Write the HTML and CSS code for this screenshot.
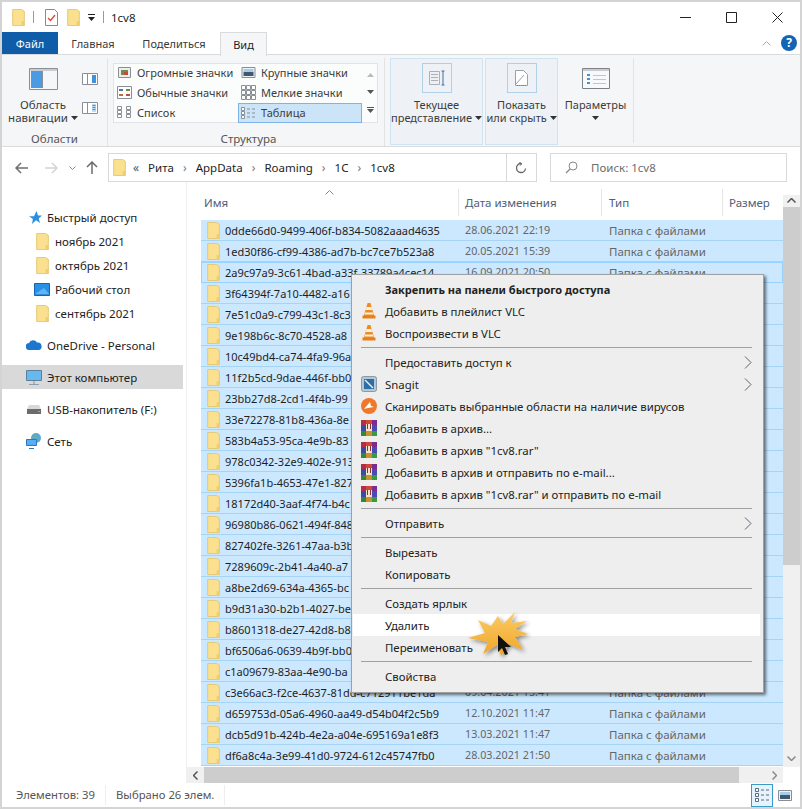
FILE: index.html
```html
<!DOCTYPE html>
<html lang="ru">
<head>
  <meta charset="UTF-8">
  <title>1cv8</title>
  <link rel="stylesheet" href="styles.css">
</head>
<body>
  <svg class="sprites" width="0" height="0">
    <defs>
      <symbol id="folder" viewBox="0 0 14 19">
        <path d="M.5.500h10l3 2v16H.5z" fill="#fbe08f" stroke="#e3c56f"/>
        <path d="M10.500 13.500h3v5h-3z" fill="#f4cd6b"/>
      </symbol>
      <symbol id="vlc" viewBox="0 0 16 16">
        <path d="M6.600 0h2.800l3.800 13H2.800z" fill="#f08a1d"/>
        <path d="M5.500 4h5l.8 3H4.700z" fill="#f6f1e8"/>
        <path d="M4.200 9.500h7.600l.6 2H3.600z" fill="#f6f1e8"/>
        <path d="M1.500 12.500h13v3h-13z" fill="#e8801a"/>
      </symbol>
      <symbol id="rar" viewBox="0 0 16 16">
        <path d="M0 0h5v5H0z" fill="#b0304a"/><path d="M5 0h6v4H5z" fill="#d0483a"/><path d="M11 0h5v5h-5z" fill="#7a2d8c"/>
        <path d="M0 5h5v6H0z" fill="#3c4aa8"/><path d="M5 4h6v7H5z" fill="#f3e6c8"/><path d="M11 5h5v6h-5z" fill="#4a4ab4"/>
        <path d="M0 11h5v5H0z" fill="#2e8a3a"/><path d="M5 11h6v5H5z" fill="#c9922e"/><path d="M11 11h5v5h-5z" fill="#3a9a44"/>
        <path d="M6.500 4v5M9.500 4v5" stroke="#8a3030"/>
      </symbol>
      <symbol id="chevron" viewBox="0 0 8 13">
        <path d="M1 .5 7 6.500l-6 6" fill="none" stroke="#5c6270"/>
      </symbol>
      <symbol id="caret" viewBox="0 0 7 4">
        <path d="M0 0h7L3.500 4z" fill="#333"/>
      </symbol>
    </defs>
  </svg>

  <div class="window">
    <!-- title bar -->
    <header class="titlebar">
      <svg class="folder-sm"><use href="#folder"/></svg>
      <span class="qa-sep"></span>
      <svg class="qa-icon" width="13" height="17" viewBox="0 0 13 17">
        <path d="M.5.500h9l3 3v13H.5z" fill="#fff" stroke="#8a8a8a"/>
        <path d="M3 9l2.500 2.500L10 6" fill="none" stroke="#d9492c" stroke-width="1.300"/>
      </svg>
      <svg class="folder-sm qa-second"><use href="#folder"/></svg>
      <svg class="qa-menu" width="7" height="7" viewBox="0 0 7 7">
        <path d="M0 0h7v1H0zM0 3h7L3.500 7z" fill="#222"/>
      </svg>
      <span class="qa-sep qa-sep-last"></span>
      <span class="title-text">1cv8</span>
      <div class="win-buttons">
        <svg width="11" height="11" viewBox="0 0 11 11"><path d="M0 5.500h11" stroke="#222"/></svg>
        <svg width="11" height="11" viewBox="0 0 11 11"><path d="M.5.500h10v10H.5z" fill="none" stroke="#222"/></svg>
        <svg width="11" height="11" viewBox="0 0 11 11"><path d="M.5.500l10 10M10.500.500l-10 10" stroke="#222"/></svg>
      </div>
    </header>

    <!-- tabs -->
    <nav class="tabs">
      <span class="tab tab-file">Файл</span>
      <span class="tab tab-home">Главная</span>
      <span class="tab tab-share">Поделиться</span>
      <span class="tab tab-view">Вид</span>
      <svg class="ribbon-up" width="9" height="5" viewBox="0 0 9 5"><path d="M.5 4.500l4-4 4 4" fill="none" stroke="#aaa"/></svg>
      <span class="help">?</span>
    </nav>

    <!-- ribbon -->
    <section class="ribbon">
      <div class="group group-panes">
        <div class="panes-row">
          <div class="nav-pane">
            <svg width="29" height="22" viewBox="0 0 29 22">
              <path d="M.5.500h28v21H.5z" fill="#f4f6f8" stroke="#8a8f96"/>
              <path d="M1 1h27v2H1z" fill="#c9cdd2"/>
              <path d="M2 3h11v17H2z" fill="#4a9be4"/>
              <path d="M13.500 3v17" stroke="#8a8f96"/>
            </svg>
            <div class="btn-label">
              <div>Область</div>
              <div>навигации <svg class="caret"><use href="#caret"/></svg></div>
            </div>
          </div>
          <div class="pane-side">
            <svg width="16" height="12" viewBox="0 0 16 12">
              <path d="M.5.500h15v11H.5z" fill="#fff" stroke="#8a8f96"/>
              <path d="M10 2h4v8h-4z" fill="#3f93dc"/><path d="M5.500 1v10" stroke="#8a8f96"/>
            </svg>
            <svg width="16" height="12" viewBox="0 0 16 12">
              <path d="M.5.500h15v11H.5z" fill="#fff" stroke="#8a8f96"/>
              <path d="M10 2h4v8h-4z" fill="#bcdcf5"/><path d="M10.500 3.500h3M10.500 5.500h3M10.500 7.500h3" stroke="#3f93dc"/><path d="M5.500 1v10" stroke="#8a8f96"/>
            </svg>
          </div>
        </div>
        <div class="group-title">Области</div>
      </div>

      <div class="group group-layout">
        <div class="gallery-wrap">
          <div class="gallery">
            <div class="g-item">
              <svg width="13" height="11" viewBox="0 0 13 11"><path d="M.5.500h12v10H.5z" fill="#eee" stroke="#8a8f96"/><path d="M3 3h7v5H3z" fill="#6b8f4a"/><path d="M6 5h4v3H6z" fill="#c9483c"/></svg>
              Огромные значки
            </div>
            <div class="g-item">
              <svg width="14" height="11" viewBox="0 0 14 11"><path d="M.5.500h13v10H.5z" fill="#eef3f7" stroke="#8a8f96"/><path d="M2 2h10v3H2z" fill="#a8cce8"/><path d="M2 5h10v4H2z" fill="#40586e"/></svg>
              Крупные значки
            </div>
            <div class="g-item">
              <svg width="15" height="13" viewBox="0 0 15 13"><path d="M.5.500h14v12H.5z" fill="#fff" stroke="#8a8f96"/><path d="M2 3h4v2H2z" fill="#4a7ea8"/><path d="M9 3h4v2H9z" fill="#6b8f4a"/><path d="M2 8h4v2H2z" fill="#c9683c"/><path d="M9 8h4v2H9z" fill="#c9483c"/></svg>
              Обычные значки
            </div>
            <div class="g-item">
              <svg width="15" height="15" viewBox="0 0 15 15"><path d="M.5.500h4v4h-4zM5.500.500h4v4h-4zM10.500.500h4v4h-4zM.5 5.500h4v4h-4zM5.500 5.500h4v4h-4zM10.500 5.500h4v4h-4zM.5 10.500h4v4h-4zM5.500 10.500h4v4h-4zM10.500 10.500h4v4h-4z" fill="#fff" stroke="#8a8f96"/></svg>
              Мелкие значки
            </div>
            <div class="g-item">
              <svg width="15" height="12" viewBox="0 0 15 12"><path d="M.5.500h4v3h-4zM.5 4.500h4v3h-4zM.5 8.500h4v3h-4zM9.500.500h4v3h-4zM9.500 4.500h4v3h-4zM9.500 8.500h4v3h-4z" fill="#fff" stroke="#8a8f96"/></svg>
              Список
            </div>
            <div class="g-item g-active">
              <svg width="15" height="12" viewBox="0 0 15 12"><path d="M.5.500h3v3h-3zM.5 4.500h3v3h-3zM.5 8.500h3v3h-3z" fill="#fff" stroke="#8a8f96"/><path d="M6 2h3M11 2h3M6 6h3M11 6h3M6 10h3M11 10h3" stroke="#8a8f96"/></svg>
              Таблица
            </div>
          </div>
          <div class="g-scroll">
            <svg width="7" height="4" viewBox="0 0 7 4"><path d="M3.500 0L7 4H0z" fill="#bbb"/></svg>
            <svg width="7" height="4" viewBox="0 0 7 4"><path d="M0 0h7L3.500 4z" fill="#555"/></svg>
            <svg width="7" height="6" viewBox="0 0 7 6"><path d="M0 0h7v1H0zM0 2h7L3.500 6z" fill="#555"/></svg>
          </div>
        </div>
        <div class="group-title">Структура</div>
      </div>

      <div class="big-btn btn-current">
        <div class="big-icon">
          <svg width="16" height="16" viewBox="0 0 16 16"><path d="M.5 1.500h10v13H.5z" fill="#eef1f4" stroke="#a9b0b8"/><path d="M2 4.500h7M2 7.500h7M2 10.500h7" stroke="#a9b0b8"/><path d="M14 1v14M12.500 1h3M12.500 15h3" stroke="#3c6e9a"/></svg>
        </div>
        <div class="btn-label">
          <div>Текущее</div>
          <div>представление <svg class="caret"><use href="#caret"/></svg></div>
        </div>
      </div>
      <div class="big-btn btn-show">
        <div class="big-icon">
          <svg width="13" height="16" viewBox="0 0 13 16"><path d="M.5.500h8l4 4v11H.5z" fill="#fff" stroke="#9aa0a6"/><path d="M1 14L9 5" stroke="#9aa0a6"/><path d="M2 15.500h10" stroke="#3f93dc" stroke-dasharray="1 1"/></svg>
        </div>
        <div class="btn-label">
          <div>Показать</div>
          <div>или скрыть <svg class="caret"><use href="#caret"/></svg></div>
        </div>
      </div>
      <div class="params">
        <svg width="28" height="21" viewBox="0 0 28 21"><path d="M.5.500h27v20H.5z" fill="#f8f9fa" stroke="#7d8287"/><path d="M1 1h26v2H1z" fill="#c9cdd2"/><path d="M5 6h3v2H5zM5 10h3v2H5zM5 14h3v2H5z" fill="#3f93dc"/><path d="M11 7.500h13M11 11.500h13M11 15.500h13" stroke="#c2c6ca"/></svg>
        <div class="btn-label">
          <div>Параметры</div>
          <div><svg class="caret"><use href="#caret"/></svg></div>
        </div>
      </div>
    </section>

    <!-- address row -->
    <div class="addr-row">
      <div class="addr-nav">
        <svg width="13" height="12" viewBox="0 0 13 12"><path d="M6 1L1 6l5 5M1 6h12" fill="none" stroke="#6d6d6d" stroke-width="1.500"/></svg>
        <svg class="fwd" width="13" height="12" viewBox="0 0 13 12"><path d="M7 1l5 5-5 5M12 6H0" fill="none" stroke="#d4d4d4" stroke-width="1.500"/></svg>
        <svg class="down" width="7" height="4" viewBox="0 0 7 4"><path d="M.5.500l3 3 3-3" fill="none" stroke="#8a8a8a"/></svg>
        <svg class="up" width="12" height="13" viewBox="0 0 12 13"><path d="M1 6l5-5 5 5M6 1v12" fill="none" stroke="#6d6d6d" stroke-width="1.500"/></svg>
      </div>
      <div class="addr-box">
        <svg class="folder-sm addr-folder"><use href="#folder"/></svg>
        <span class="crumb-more">«</span>
        <span class="crumb">Рита</span><span class="crumb-arrow">›</span>
        <span class="crumb">AppData</span><span class="crumb-arrow">›</span>
        <span class="crumb">Roaming</span><span class="crumb-arrow">›</span>
        <span class="crumb">1С</span><span class="crumb-arrow">›</span>
        <span class="crumb">1cv8</span>
        <span class="addr-drop">
          <svg width="11" height="12" viewBox="0 0 11 12"><path d="M5 1.500a4.500 4.500 0 1 0 4.500 5" fill="none" stroke="#666" stroke-width="1.300"/><path d="M3.500.5 6 1.700 3.800 3.500" fill="none" stroke="#666"/></svg>
        </span>
      </div>
      <div class="search-box">
        <svg width="13" height="13" viewBox="0 0 13 13"><circle cx="8" cy="5" r="4" fill="none" stroke="#888"/><path d="M5 8l-4 4" stroke="#888" stroke-width="1.200"/></svg>
        <span>Поиск: 1cv8</span>
      </div>
    </div>

    <!-- nav tree + list -->
    <main class="content">
      <aside class="tree">
        <div class="tree-item level-0">
          <svg width="16" height="13" viewBox="-3 0 16 13"><path d="M7.500 0l1.500 4.500h4L9.700 7.400l1.300 4.600L7 9.300 3 13l.9-5L0 5.200h5z" fill="#2b8fe0"/></svg>
          Быстрый доступ
        </div>
        <div class="tree-item level-1"><svg class="folder-sm"><use href="#folder"/></svg>ноябрь 2021</div>
        <div class="tree-item level-1"><svg class="folder-sm"><use href="#folder"/></svg>октябрь 2021</div>
        <div class="tree-item level-1">
          <svg class="tree-desk" width="16" height="13" viewBox="0 0 16 13"><path d="M.5.500h15v12H.5z" fill="#2a8fe6" stroke="#1565b5"/><path d="M1 11l9-6 5 6z" fill="#63b4f2"/></svg>
          Рабочий стол
        </div>
        <div class="tree-item level-1"><svg class="folder-sm"><use href="#folder"/></svg>сентябрь 2021</div>
        <div class="tree-item level-0 tree-gap">
          <svg width="16" height="10" viewBox="0 0 16 10"><path d="M3.500 10a3.500 3.500 0 0 1-.5-7A4.500 4.500 0 0 1 11 2.500 3.800 3.800 0 0 1 12.500 10z" fill="#1c78cf"/></svg>
          OneDrive - Personal
        </div>
        <div class="tree-item level-0 tree-gap tree-selected">
          <svg width="16" height="15" viewBox="0 0 16 15"><path d="M.5.500h15v10H.5z" fill="#67b8ee" stroke="#5c7f9b"/><path d="M3 14.500h10" stroke="#8aa0b2"/><path d="M7 11h2v3H7z" fill="#a7b7c4"/></svg>
          Этот компьютер
        </div>
        <div class="tree-item level-0 tree-gap">
          <svg width="14" height="10" viewBox="0 0 14 10"><path d="M2 1h10l2 4v5H0V5z" fill="#d8d8d8"/><path d="M0 5h14v5H0z" fill="#6c6c6c"/><path d="M11 7h2v1h-2z" fill="#5fd35f"/></svg>
          USB-накопитель (F:)
        </div>
        <div class="tree-item level-0 tree-gap">
          <svg width="16" height="16" viewBox="0 0 16 16"><circle cx="10" cy="5" r="5" fill="#5aa7dc"/><path d="M8 1l3 3-2 3z" fill="#72b95c"/><path d="M.5 6.500h10v6H.5z" fill="#57aef0" stroke="#2b79bd"/><path d="M3 15.500h5" stroke="#2b79bd"/></svg>
          Сеть
        </div>
      </aside>

      <section class="list">
        <div class="list-head">
          <div class="col col-name">Имя
            <svg class="sort-mark" width="9" height="5" viewBox="0 0 9 5"><path d="M.5 4.500l4-4 4 4" fill="none" stroke="#888"/></svg>
          </div>
          <div class="col col-date">Дата изменения</div>
          <div class="col col-type">Тип</div>
          <div class="col col-size">Размер</div>
        </div>
        <div class="rows-area">
          <div class="rows" id="rows"></div>
          <div class="vscroll">
            <svg width="9" height="5" viewBox="0 0 9 5"><path d="M.5 4.500l4-4 4 4" fill="none" stroke="#555" stroke-width="1.500"/></svg>
            <div class="vthumb"></div>
            <svg class="v-down" width="9" height="5" viewBox="0 0 9 5"><path d="M.5.500l4 4 4-4" fill="none" stroke="#888" stroke-width="1.500"/></svg>
          </div>
        </div>
        <div class="hscroll">
          <svg width="5" height="9" viewBox="0 0 5 9"><path d="M4.500.500l-4 4 4 4" fill="none" stroke="#555" stroke-width="1.500"/></svg>
          <div class="hthumb"></div>
          <svg width="5" height="9" viewBox="0 0 5 9"><path d="M.5.500l4 4-4 4" fill="none" stroke="#888" stroke-width="1.500"/></svg>
        </div>
      </section>
    </main>

    <!-- status bar -->
    <footer class="status">
      <span class="status-cell">Элементов: 39</span>
      <span class="status-cell">Выбрано 26 элем.</span>
      <div class="view-btns">
        <span class="view-on">
          <svg width="15" height="14" viewBox="0 0 15 14"><path d="M.5.500h3v3h-3zM.5 5.500h3v3h-3zM.5 10.500h3v3h-3z" fill="#fff" stroke="#5f6a74"/><path d="M6 2h3M11 2h3M6 7h3M11 7h3M6 12h3M11 12h3" stroke="#5f6a74"/></svg>
        </span>
        <svg width="14" height="11" viewBox="0 0 14 11"><path d="M.5.500h13v10H.5z" fill="#eef3f7" stroke="#8a8f96"/><path d="M2 2h10v3H2z" fill="#a8cce8"/><path d="M2 5h10v4H2z" fill="#40586e"/></svg>
      </div>
    </footer>

    <!-- context menu -->
    <div class="ctx" id="ctx"></div>

    <!-- cursor highlight -->
    <svg class="burst" width="70" height="56" viewBox="0 0 70 56">
      <defs>
        <linearGradient id="burst-fill" x1="0" y1="0" x2="0" y2="1">
          <stop offset="0" stop-color="#fbcb62"/>
          <stop offset="1" stop-color="#f0a52a"/>
        </linearGradient>
        <filter id="burst-shadow" x="-20%" y="-20%" width="150%" height="150%">
          <feDropShadow dx="2" dy="2" stdDeviation="2" flood-color="#000" flood-opacity=".45"/>
        </filter>
      </defs>
      <path d="M13 12L26 18 33 8 38 16 50 4 46 15 62 13 50 21 63 26 50 29 58 42 44 36 36 48 32 37 18 46 23 34 3 30 20 25z" fill="url(#burst-fill)" filter="url(#burst-shadow)"/>
      <path d="M33 27v17l4-4 3 7 3-1-3-7h6z" fill="#111"/>
    </svg>
  </div>

  <script src="app.js"></script>
</body>
</html>
```

FILE: styles.css
```css
* {
  box-sizing: border-box;
}
html, body {
  margin: 0;
  padding: 0;
}
body {
  width: 802px;
  height: 809px;
  overflow: hidden;
  font-family: "Noto Sans", "Open Sans", sans-serif;
  font-size: 11.5px;
  color: #1e1e1e;
  background: #fff;
}
.sprites {
  position: absolute;
}
.window {
  position: relative;
  width: 802px;
  height: 809px;
  border: 2px solid #d4d4d4;
  overflow: hidden;
  display: flex;
  flex-direction: column;
  background: #fff;
}
.folder-sm {
  width: 13px;
  height: 17px;
  flex: none;
}

/* title bar */
.titlebar {
  height: 30px;
  display: flex;
  align-items: center;
  padding-left: 10px;
  flex: none;
}
.qa-sep {
  width: 1px;
  height: 12px;
  background: #9a9a9a;
  margin: 0 11px 0 8px;
}
.qa-second {
  margin-left: 9px;
}
.qa-menu {
  margin-left: 8px;
}
.qa-sep-last {
  margin: 0 7px 0 8px;
}
.title-text {
  font-size: 11.5px;
}
.win-buttons {
  margin-left: auto;
  margin-right: 17px;
  display: flex;
  gap: 35px;
}

/* tabs */
.tabs {
  height: 23px;
  display: flex;
  position: relative;
  flex: none;
  border-bottom: 1px solid #dadbdc;
  align-items: stretch;
}
.tab {
  display: flex;
  align-items: center;
  justify-content: center;
  font-size: 11px;
}
.tab-file {
  width: 56px;
  background: #0f5ca8;
  color: #fff;
}
.tab-home {
  width: 70px;
  color: #3a3a3a;
}
.tab-share {
  width: 92px;
  color: #3a3a3a;
}
.tab-view {
  width: 47px;
  height: 24px;
  border: 1px solid #dadbdc;
  border-bottom: none;
  background: #f5f6f7;
}
.ribbon-up {
  position: absolute;
  left: 760px;
  top: 9px;
}
.help {
  position: absolute;
  left: 779px;
  top: 3px;
  width: 16px;
  height: 16px;
  border-radius: 50%;
  background: #1464b4;
  color: #fff;
  font-weight: 700;
  font-size: 12px;
  line-height: 16px;
  text-align: center;
}

/* ribbon */
.ribbon {
  height: 92px;
  flex: none;
  display: flex;
  background: #f5f6f7;
  border-bottom: 1px solid #dadbdc;
  padding-top: 3px;
  color: #3c3c3c;
  font-size: 11px;
}
.group {
  display: flex;
  flex-direction: column;
  border-right: 1px solid #e2e3e4;
}
.group-title {
  margin-top: auto;
  text-align: center;
  color: #555;
  line-height: 15px;
  font-size: 11.5px;
}
.group-panes {
  width: 106px;
}
.panes-row {
  display: flex;
  padding-top: 10px;
}
.nav-pane {
  width: 82px;
  display: flex;
  flex-direction: column;
  align-items: center;
  font-size: 11.5px;
}
.btn-label {
  text-align: center;
  line-height: 13px;
  margin-top: 8px;
  white-space: nowrap;
}
.caret {
  width: 7px;
  height: 4px;
  vertical-align: 2px;
}
.pane-side {
  display: flex;
  flex-direction: column;
  gap: 17px;
  padding-top: 5px;
  margin-left: -2px;
}
.group-layout {
  width: 277px;
  padding-left: 5px;
}
.gallery-wrap {
  width: 265px;
  height: 60px;
  margin-top: 5px;
  display: flex;
  border: 1px solid #e1e3e6;
  background: #fbfcfc;
}
.gallery {
  width: 249px;
  margin-top: -1px;
  display: grid;
  grid-template-columns: 124px 124px;
  grid-auto-rows: 20px;
}
.g-item {
  display: flex;
  align-items: center;
  gap: 5px;
  padding: 0 0 2px 3px;
  white-space: nowrap;
}
.g-item svg {
  width: 15px;
  flex: none;
}
.g-active {
  background: #cce4f7;
  border: 1px solid #7eb4ea;
  padding: 0 0 1px 2px;
}
.g-scroll {
  flex: 1;
  display: flex;
  flex-direction: column;
  align-items: center;
  justify-content: space-around;
  padding: 3px 0;
}
.big-btn {
  height: 87px;
  background: #eef2f7;
  border: 1px solid #cfe3f2;
  display: flex;
  flex-direction: column;
  align-items: center;
  padding-top: 4px;
}
.big-icon {
  width: 30px;
  height: 30px;
  border: 1px solid #b0d0e8;
  display: flex;
  align-items: center;
  justify-content: center;
}
.btn-current {
  width: 93px;
  margin-left: 5px;
}
.btn-show {
  width: 73px;
  margin-left: 2px;
}
.big-btn .btn-label {
  margin-top: 5px;
}
.params {
  width: 76px;
  display: flex;
  flex-direction: column;
  align-items: center;
  padding-top: 10px;
  border-right: 1px solid #e2e3e4;
  height: 85px;
}
.params .btn-label {
  margin-top: 9px;
}

/* address row */
.addr-row {
  height: 35px;
  flex: none;
  display: flex;
  padding-top: 6px;
  align-items: flex-start;
}
.addr-nav {
  width: 106px;
  height: 29px;
  display: flex;
  align-items: center;
  padding-left: 13px;
}
.fwd {
  margin-left: 17px;
}
.down {
  margin-left: 11px;
}
.up {
  margin-left: 10px;
}
.addr-box {
  width: 429px;
  height: 29px;
  border: 1px solid #d9d9d9;
  display: flex;
  align-items: center;
  position: relative;
}
.addr-folder {
  margin-left: 4px;
}
.crumb-more {
  margin: 0 9px 0 7px;
  color: #555;
  font-size: 12px;
}
.crumb-arrow {
  color: #777;
  margin: 0 9px;
  font-size: 12px;
}
.addr-drop {
  position: absolute;
  right: 0;
  top: 0;
  width: 30px;
  height: 27px;
  border-left: 1px solid #d9d9d9;
  display: flex;
  align-items: center;
  justify-content: center;
}
.search-box {
  width: 237px;
  height: 29px;
  margin-left: 13px;
  border: 1px solid #d9d9d9;
  display: flex;
  align-items: center;
  gap: 13px;
  padding-left: 14px;
  color: #6d6d6d;
}

/* tree */
.content {
  flex: 1;
  display: flex;
  min-height: 0;
}
.tree {
  width: 185px;
  flex: none;
  padding-top: 23px;
  border-right: 1px solid #f0f0f0;
  color: #222;
}
.tree-item {
  height: 24px;
  display: flex;
  align-items: center;
  white-space: nowrap;
}
.level-0 {
  padding-left: 24px;
  gap: 5px;
}
.level-0 svg {
  width: 16px;
  flex: none;
}
.level-1 {
  padding-left: 34px;
  gap: 6px;
}
.level-1 svg {
  width: 13px;
  flex: none;
}
.level-1 svg.tree-desk {
  width: 16px;
  margin: 0 -1px 0 -2px;
}
.tree-gap {
  margin-top: 8px;
}
.tree-selected {
  background: #d9d9d9;
  width: 181px;
}

/* list */
.list {
  flex: 1;
  display: flex;
  flex-direction: column;
  min-width: 0;
}
.list-head {
  height: 38px;
  display: flex;
  color: #4c607a;
  flex: none;
  position: relative;
}
.col {
  height: 27px;
  margin-top: 7px;
  display: flex;
  align-items: center;
  padding-left: 7px;
  border-right: 1px solid #e5e5e5;
  white-space: nowrap;
}
.col-name {
  width: 272px;
  padding-left: 17px;
}
.col-date {
  width: 143px;
  padding-left: 6px;
}
.col-type {
  width: 121px;
}
.col-size {
  border-right: none;
  padding-left: 6px;
}
.sort-mark {
  position: absolute;
  left: 138px;
  top: 8px;
}
.rows-area {
  flex: 1;
  display: flex;
  min-height: 0;
  position: relative;
}
.rows {
  width: 582px;
  margin-left: 14px;
}
.row {
  height: 21px;
  display: flex;
  align-items: center;
  background: #cce8ff;
  border-bottom: 1px solid #a6d4f5;
  white-space: nowrap;
  overflow: hidden;
}
.row-focus {
  outline: 1px solid #99d1ff;
  outline-offset: -1px;
}
.row svg {
  width: 13px;
  height: 17px;
  margin-left: 6px;
  flex: none;
}
.r-name {
  width: 245px;
  padding-left: 5px;
  font-size: 11px;
  color: #1e1e1e;
}
.r-date {
  width: 144px;
  color: #666;
  font-size: 10.75px;
}
.r-type {
  color: #666;
}
.vscroll {
  position: absolute;
  right: 0;
  top: -25px;
  bottom: 0;
  width: 17px;
  background: #f0f0f0;
  display: flex;
  flex-direction: column;
  align-items: center;
  padding-top: 3px;
}
.vthumb {
  width: 100%;
  height: 358px;
  background: #cdcdcd;
  margin-top: 4px;
}
.v-down {
  margin-top: auto;
  margin-bottom: 6px;
}
.hscroll {
  height: 16px;
  flex: none;
  background: #f0f0f0;
  display: flex;
  align-items: center;
  padding: 0 6px;
  margin-right: 17px;
}
.hthumb {
  width: 535px;
  height: 100%;
  background: #cdcdcd;
  margin: 0 33px 0 6px;
  flex: none;
}

/* status bar */
.status {
  height: 24px;
  flex: none;
  display: flex;
  align-items: center;
  padding-left: 14px;
  color: #555;
  font-size: 11.3px;
  position: relative;
}
.status-cell {
  padding-right: 10px;
  margin-right: 10px;
  border-right: 1px solid #eee;
  line-height: 20px;
}
.view-btns {
  margin-left: auto;
  display: flex;
  align-items: center;
  gap: 5px;
  padding-right: 8px;
}
.view-on {
  width: 22px;
  height: 23px;
  background: #e5f3ff;
  border: 1px solid #3b9bc8;
  display: flex;
  align-items: center;
  justify-content: center;
}

/* context menu */
.ctx {
  position: absolute;
  left: 349px;
  top: 272px;
  width: 413px;
  height: 419px;
  background: #eeeeee;
  border: 1px solid #a0a0a0;
  box-shadow: 2px 2px 3px rgba(0, 0, 0, .55);
  padding: 3px 3px 3px 1px;
  color: #222;
  font-size: 11.4px;
}
.m-item {
  height: 22px;
  display: flex;
  align-items: center;
  position: relative;
  padding-left: 32px;
  white-space: nowrap;
}
.m-item > svg.m-icon {
  position: absolute;
  left: 8px;
  top: 3px;
  width: 16px;
  height: 16px;
}
.m-item > svg.m-arrow {
  position: absolute;
  right: 8px;
  top: 5px;
  width: 8px;
  height: 13px;
}
.m-bold {
  font-weight: 700;
  font-size: 11px;
}
.m-hover {
  background: #fff;
}
.m-sep {
  height: 7px;
  padding-top: 3px;
  margin: 0 8px;
}
.m-sep::after {
  content: "";
  display: block;
  height: 1px;
  background: #a0a0a0;
}
.burst {
  position: absolute;
  left: 463px;
  top: 606px;
}
```

FILE: app.js
```js
const rowsEl = document.getElementById('rows');
const ctxEl = document.getElementById('ctx');

// name, date (only rows not hidden by the menu need one)
const rows = [
  ['0dde66d0-9499-406f-b834-5082aaad4635', '28.06.2021 22:19'],
  ['1ed30f86-cf99-4386-ad7b-bc7ce7b523a8', '20.05.2021 15:39'],
  ['2a9c97a9-3c61-4bad-a33f-33789a4cec14', '16.09.2021 20:50'],
  ['3f64394f-7a10-4482-a16'],
  ['7e51c0a9-c799-43c1-8c3'],
  ['9e198b6c-8c70-4528-a8'],
  ['10c49bd4-ca74-4fa9-96a'],
  ['11f2b5cd-9dae-446f-bb0'],
  ['23bb27d8-2cd1-4f4b-99'],
  ['33e72278-81b8-436a-8e'],
  ['583b4a53-95ca-4e9b-83'],
  ['978c0342-32e9-402e-913'],
  ['5396fa1b-4653-47e1-827'],
  ['18172d40-3aaf-4f74-b4c'],
  ['96980b86-0621-494f-848'],
  ['827402fe-3261-47aa-b3b'],
  ['7289609c-2b41-4a40-a7'],
  ['a8be2d69-634a-4365-bc'],
  ['b9d31a30-b2b1-4027-be'],
  ['b8601318-de27-42d8-b8'],
  ['bf6506a6-0639-4b9f-bb0'],
  ['c1a09679-83aa-4e90-ba'],
  ['c3e66ac3-f2ce-4637-81dd-c712911be1da', '09.04.2021 15:41'],
  ['d659753d-05a6-4960-aa49-d54b04f2c5b9', '12.10.2021 11:47'],
  ['dcb5d91b-424b-4e2a-a04e-695169a1e8f3', '13.03.2021 11:47'],
  ['df6a8c4a-3e99-41d0-9724-612c45747fb0', '28.03.2021 21:50']
];

rows.forEach((r, i) => {
  const row = document.createElement('div');
  row.className = i === 2 ? 'row row-focus' : 'row';
  row.innerHTML = `<svg><use href="#folder"/></svg>
    <span class="r-name">${r[0]}</span>
    <span class="r-date">${r[1] || ''}</span>
    <span class="r-type">${r[1] ? 'Папка с файлами' : ''}</span>`;
  rowsEl.appendChild(row);
});

const snagit = `<svg class="m-icon" viewBox="0 0 16 16"><rect x=".5" y=".5" width="15" height="15" rx="2" fill="#b8c6d2" stroke="#8a9aa8"/><rect x="3" y="3" width="10" height="10" fill="#2d6ea8"/><path d="M4 4l8 8" stroke="#e8f0f6" stroke-width="1.500"/></svg>`;
const scan = `<svg class="m-icon" viewBox="0 0 16 16"><circle cx="8" cy="8" r="8" fill="#f0782a"/><path d="M3 11L9 4l1 4 3 1-6 1z" fill="#fff"/></svg>`;
const vlc = '<svg class="m-icon"><use href="#vlc"/></svg>';
const rar = '<svg class="m-icon"><use href="#rar"/></svg>';
const arrow = '<svg class="m-arrow"><use href="#chevron"/></svg>';

const menu = [
  { text: 'Закрепить на панели быстрого доступа', bold: true },
  { text: 'Добавить в плейлист VLC', icon: vlc },
  { text: 'Воспроизвести в VLC', icon: vlc },
  null,
  { text: 'Предоставить доступ к', sub: true },
  { text: 'Snagit', icon: snagit, sub: true },
  { text: 'Сканировать выбранные области на наличие вирусов', icon: scan },
  { text: 'Добавить в архив...', icon: rar },
  { text: 'Добавить в архив "1cv8.rar"', icon: rar },
  { text: 'Добавить в архив и отправить по e-mail...', icon: rar },
  { text: 'Добавить в архив "1cv8.rar" и отправить по e-mail', icon: rar },
  null,
  { text: 'Отправить', sub: true },
  null,
  { text: 'Вырезать' },
  { text: 'Копировать' },
  null,
  { text: 'Создать ярлык' },
  { text: 'Удалить', hover: true },
  { text: 'Переименовать' },
  null,
  { text: 'Свойства' }
];

menu.forEach(m => {
  const el = document.createElement('div');
  if (!m) {
    el.className = 'm-sep';
  } else {
    el.className = 'm-item' + (m.bold ? ' m-bold' : '') + (m.hover ? ' m-hover' : '');
    el.innerHTML = (m.icon || '') + `<span>${m.text}</span>` + (m.sub ? arrow : '');
  }
  ctxEl.appendChild(el);
});
```
